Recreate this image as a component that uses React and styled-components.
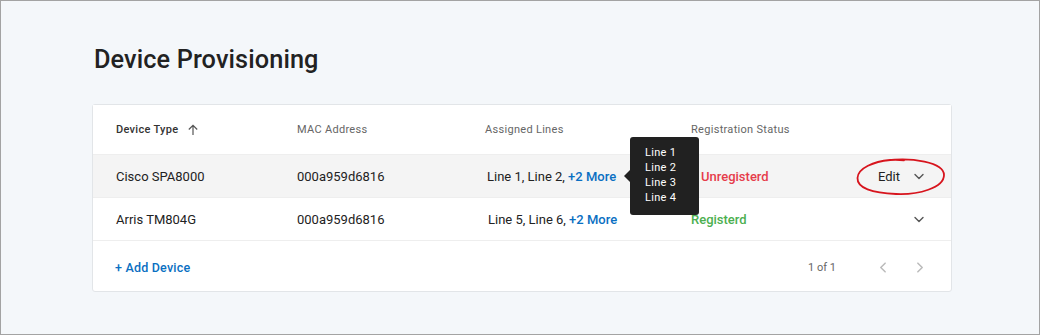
import React from "react";
import styled, { createGlobalStyle } from "styled-components";

const GlobalStyle = createGlobalStyle`
  html, body {
    margin: 0;
    padding: 0;
    background: #f4f7fa;
  }
  * {
    box-sizing: border-box;
  }
`;

const Page = styled.main`
  width: 1040px;
  height: 335px;
  border: 1px solid #a3a3a3;
  background-color: #f4f7fa;
  padding: 45px 87px 0 91px;
  font-family: Roboto, "Liberation Sans", sans-serif;
  color: #222;
`;

const Title = styled.h1`
  margin: 0 0 30px 2px;
  font-size: 25.3px;
  line-height: 28px;
  font-weight: 500;
  color: #222;
  letter-spacing: 0.1px;
`;

const Card = styled.section`
  background-color: #fff;
  border: 1px solid #e2e5e8;
  border-radius: 3px;
`;

const Row = styled.div`
  display: grid;
  grid-template-columns: 181px 188px 206px 1fr 120px;
  align-items: center;
  height: ${(p) => p.height || 43}px;
  padding-left: 23px;
  background-color: ${(p) => (p.shaded ? "#f4f4f4" : "#fff")};
  border-bottom: 1px solid #eeeeee;
`;

const HeadCell = styled.div`
  display: flex;
  align-items: center;
  gap: 9px;
  font-size: 11px;
  font-weight: ${(p) => (p.active ? 500 : 400)};
  color: ${(p) => (p.active ? "#333" : "#666")};
  letter-spacing: 0.3px;
`;

const Cell = styled.div`
  position: relative;
  font-size: 13px;
  color: #222;
  padding-left: ${(p) => p.shift || 0}px;
`;

const More = styled.span`
  color: #0a6fc2;
  font-weight: 500;
`;

const Status = styled.span`
  font-size: 13px;
  font-weight: 500;
  color: ${(p) => (p.ok ? "#4caf50" : "#e63c4b")};
`;

const Tooltip = styled.div`
  position: absolute;
  left: 145px;
  top: -32px;
  width: 69px;
  padding: 8px 0 9px 15px;
  background-color: #212121;
  border-radius: 3px;
  color: #fff;
  font-size: 11px;
  line-height: 15.3px;
  letter-spacing: 0.3px;
  z-index: 2;

  &::before {
    content: "";
    position: absolute;
    left: -6px;
    top: 33px;
    border-top: 6px solid transparent;
    border-bottom: 6px solid transparent;
    border-right: 6px solid #212121;
  }
`;

const Actions = styled.div`
  display: flex;
  justify-content: flex-end;
  padding-right: 26px;
`;

const EditGroup = styled.div`
  position: relative;
  display: flex;
  align-items: center;
  gap: 13px;
  font-size: 13px;
  color: #222;
`;

const Circle = styled.svg`
  position: absolute;
  left: -22px;
  top: -11px;
  overflow: visible;
  pointer-events: none;
`;

const Footer = styled.div`
  display: flex;
  align-items: center;
  height: 50px;
  padding: 2px 25px 0 22px;
`;

const AddLink = styled.a`
  font-size: 12.5px;
  font-weight: 500;
  color: #0a6fc2;
  letter-spacing: 0.2px;
  text-decoration: none;
`;

const Pager = styled.div`
  margin-left: auto;
  display: flex;
  align-items: center;
  gap: 41px;
  font-size: 11px;
  color: #666;
`;

const PagerButtons = styled.div`
  display: flex;
  align-items: center;
  gap: 23px;
`;

const Chevron = ({ dir = "down", color = "#555", size = 12 }) => {
  const d = {
    down: "M2 4.5 L6 8.5 L10 4.5",
    left: "M7.5 2 L3.5 6 L7.5 10",
    right: "M4.5 2 L8.5 6 L4.5 10",
  }[dir];
  return (
    <svg width={size} height={size} viewBox="0 0 12 12" style={{ flexShrink: 0 }}>
      <path d={d} fill="none" stroke={color} strokeWidth="1.4" strokeLinecap="round" strokeLinejoin="round" />
    </svg>
  );
};

const ArrowUp = () => (
  <svg width="12" height="12" viewBox="0 0 12 12">
    <path d="M6 11 V1.5 M1.8 5.5 L6 1.3 L10.2 5.5" fill="none" stroke="#555" strokeWidth="1.2" />
  </svg>
);

const devices = [
  { type: "Cisco SPA8000", mac: "000a959d6816", lines: "Line 1, Line 2,", ok: false, tip: true },
  { type: "Arris TM804G", mac: "000a959d6816", lines: "Line 5, Line 6,", ok: true },
];

export default function App() {
  return (
    <>
      <GlobalStyle />
      <Page>
        <Title>Device Provisioning</Title>
        <Card>
          <Row height={50}>
            <HeadCell active>
              Device Type <ArrowUp />
            </HeadCell>
            <HeadCell>MAC Address</HeadCell>
            <HeadCell>Assigned Lines</HeadCell>
            <HeadCell>Registration Status</HeadCell>
            <div />
          </Row>
          {devices.map((d, i) => (
            <Row key={i} shaded={d.tip}>
              <Cell>{d.type}</Cell>
              <Cell>{d.mac}</Cell>
              <Cell shift={d.tip ? 2 : 3}>
                {d.lines} <More>+2 More</More>
                {d.tip && (
                  <Tooltip>
                    <div>Line 1</div>
                    <div>Line 2</div>
                    <div>Line 3</div>
                    <div>Line 4</div>
                  </Tooltip>
                )}
              </Cell>
              <Cell shift={d.tip ? 10 : 0}>
                <Status ok={d.ok}>{d.ok ? "Registerd" : "Unregisterd"}</Status>
              </Cell>
              <Actions>
                <EditGroup>
                  {d.tip && <span>Edit</span>}
                  <Chevron />
                  {d.tip && (
                    <Circle width="90" height="38" viewBox="0 0 90 38">
                      <path
                        d="M30 2.5 C55 -1 88 4 88 17 C88 30 62 37 40 36 C16 35 1 30 1.5 20 C2 10 18 3.5 34 2 C40 1.5 44 1.8 48 2.4"
                        fill="none"
                        stroke="#d7141d"
                        strokeWidth="1.8"
                        strokeLinecap="round"
                      />
                    </Circle>
                  )}
                </EditGroup>
              </Actions>
            </Row>
          ))}
          <Footer>
            <AddLink href="#">+ Add Device</AddLink>
            <Pager>
              <span>1 of 1</span>
              <PagerButtons>
                <Chevron dir="left" color="#bbb" size={13} />
                <Chevron dir="right" color="#bbb" size={13} />
              </PagerButtons>
            </Pager>
          </Footer>
        </Card>
      </Page>
    </>
  );
}
